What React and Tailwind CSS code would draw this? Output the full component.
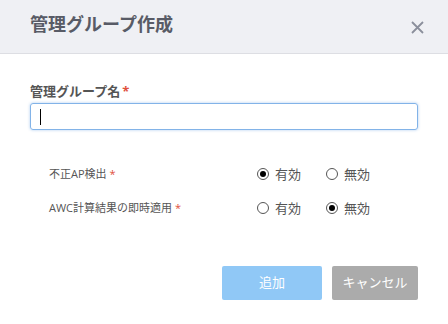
const FONT = "font-['Open_Sans','Noto_Sans_CJK_JP',sans-serif]";

function Radio({ checked, label }) {
  return (
    <label className="flex items-center gap-[6px] text-[13px] text-[#555]">
      <span className="flex h-[12px] w-[12px] items-center justify-center rounded-full border border-[#555] bg-white">
        {checked && <span className="h-[6px] w-[6px] rounded-full bg-black" />}
      </span>
      <span className="leading-none">{label}</span>
    </label>
  );
}

function Setting({ label, value }) {
  return (
    <div className="grid h-[20px] grid-cols-[208px_auto] items-center">
      <div className="text-[11px] text-[#555]">
        {label}
        <span className="ml-[3px] text-[#e0503c]">*</span>
      </div>
      <div className="flex items-center">
        <div className="w-[69px]">
          <Radio checked={value} label="有効" />
        </div>
        <Radio checked={!value} label="無効" />
      </div>
    </div>
  );
}

export default function App() {
  return (
    <div className={`h-[324px] w-[448px] bg-white ${FONT}`}>
      <header className="flex h-[54px] items-center justify-between border-b border-[#dddee3] bg-[#eff0f4] px-[30px] pb-[4px]">
        <h2 className="text-[18px] font-bold text-[#585b66]">管理グループ作成</h2>
        <svg width="13" height="13" viewBox="0 0 13 13" className="mt-[5px] mr-[-6px]">
          <path d="M1 1 L12 12 M12 1 L1 12" stroke="#8b8f9c" strokeWidth="1.8" />
        </svg>
      </header>

      <section className="px-[30px] pt-[28px]">
        <div className="h-[18px] text-[13px] font-bold leading-[18px] text-[#555]">
          管理グループ名<span className="ml-0.5 text-[#e0503c]">*</span>
        </div>
        <div className="mt-[3px] flex h-[27px] items-center rounded-[3px] border border-[#82b3e8] pl-[9px] shadow-[0_0_3px_rgba(70,140,220,0.45)]">
          <div className="h-[16px] w-px bg-black" />
        </div>

        <div className="mt-[34px] flex flex-col gap-[14px] pl-[19px]">
          <Setting label="不正AP検出" value={true} />
          <Setting label="AWC計算結果の即時適用" value={false} />
        </div>

        <div className="mt-[48px] flex justify-end gap-[10px]">
          <button className="h-[34px] w-[100px] rounded-[2px] bg-[#90c8f6] text-[13px] text-white">
            追加
          </button>
          <button className="h-[34px] w-[86px] rounded-[2px] bg-[#ababab] text-[13px] text-white">
            キャンセル
          </button>
        </div>
      </section>
    </div>
  );
}
